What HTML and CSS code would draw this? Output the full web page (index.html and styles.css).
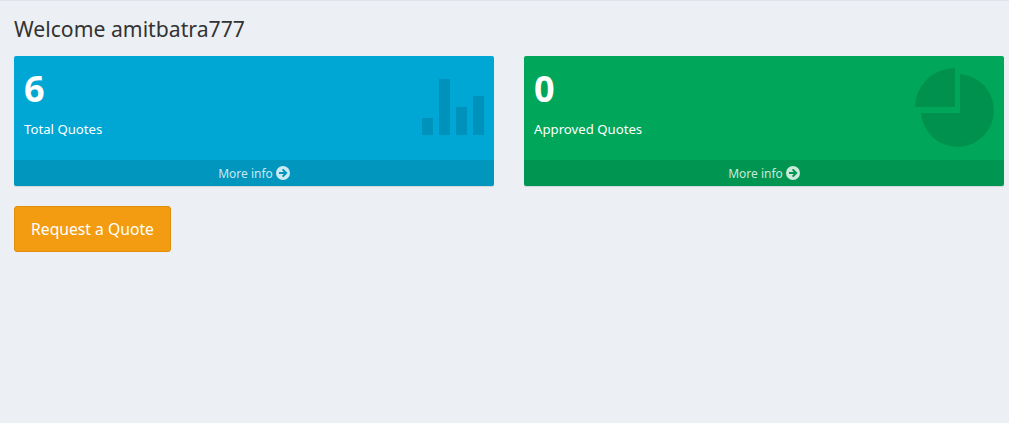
FILE: index.html
```html
<!DOCTYPE html>
<html lang="en">
<head>
<meta charset="utf-8">
<title>Dashboard</title>
<link rel="stylesheet" href="styles.css">
</head>
<body>
<main class="page">
  <h1 class="welcome">Welcome amitbatra777</h1>
  <section class="boxes">
    <article class="box box-blue">
      <div class="box-inner">
        <h3 class="box-num">6</h3>
        <p class="box-label">Total Quotes</p>
      </div>
      <svg class="box-icon icon-bars" viewBox="0 0 62 56" width="62" height="56" aria-hidden="true">
        <rect x="0" y="39" width="11" height="17"/>
        <rect x="17" y="0" width="11" height="56"/>
        <rect x="34" y="28" width="11" height="28"/>
        <rect x="51" y="17" width="11" height="39"/>
      </svg>
      <a class="box-footer" href="#">More info
        <svg class="arrow" viewBox="0 0 14 14" width="14" height="14" aria-hidden="true"><circle cx="7" cy="7" r="7" fill="currentColor"/><path class="arrow-mark" d="M3 7h7M6.6 3.4 10.2 7l-3.6 3.6"/></svg>
      </a>
    </article>
    <article class="box box-green">
      <div class="box-inner">
        <h3 class="box-num">0</h3>
        <p class="box-label">Approved Quotes</p>
      </div>
      <svg class="box-icon icon-pie" viewBox="0 0 80 80" width="80" height="80" aria-hidden="true">
        <path d="M40 0V39H0A40 39 0 0 1 40 0Z"/>
        <path d="M45 6A36.5 36.5 0 1 1 6 45H45Z"/>
      </svg>
      <a class="box-footer" href="#">More info
        <svg class="arrow" viewBox="0 0 14 14" width="14" height="14" aria-hidden="true"><circle cx="7" cy="7" r="7" fill="currentColor"/><path class="arrow-mark" d="M3 7h7M6.6 3.4 10.2 7l-3.6 3.6"/></svg>
      </a>
    </article>
  </section>
  <button class="quote-btn" type="button">Request a Quote</button>
</main>
</body>
</html>
```
FILE: styles.css
```css
* { box-sizing: border-box; }
html, body { height: 100%; }
body {
  margin: 0;
  background: #ecf0f5;
  border-top: 1px solid #dfe4ea;
  font-family: "Noto Sans", "Liberation Sans", sans-serif;
  color: #333;
  overflow: hidden;
}
.page { padding: 14px 5px 0 14px; }
.welcome {
  margin: 0;
  font-size: 21.2px;
  font-weight: 400;
  line-height: 27px;
  height: 41px;
  color: #333;
}
.boxes {
  display: grid;
  grid-template-columns: 480px 480px;
  column-gap: 30px;
}
.box {
  position: relative;
  height: 130px;
  border-radius: 2px;
  color: #fff;
  display: flex;
  flex-direction: column;
  justify-content: space-between;
  box-shadow: 0 1px 1px rgba(0,0,0,.1);
}
.box-blue { background: #00a7d4; }
.box-green { background: #00a65a; }
.box-inner { padding: 9px 10px 0; }
.box-num {
  margin: 0 0 8px;
  font-size: 36px;
  font-weight: 700;
  line-height: 47px;
}
.box-label {
  margin: 0;
  font-size: 13.2px;
  line-height: 18px;
  height: 18px;
}
.box-icon { position: absolute; fill: rgba(0,0,0,.12); }
.icon-bars { top: 23px; right: 10px; }
.icon-pie { top: 12px; right: 9px; }
.box-footer {
  display: flex;
  align-items: center;
  justify-content: center;
  gap: 3px;
  height: 26px;
  background: rgba(0,0,0,.1);
  color: rgba(255,255,255,.8);
  font-size: 12px;
  text-decoration: none;
  border-radius: 0 0 2px 2px;
}
.arrow-mark { fill: none; stroke: #0096bf; stroke-width: 2; }
.box-green .arrow-mark { stroke: #009551; }
.quote-btn {
  display: block;
  margin-top: 20px;
  width: 157px;
  height: 46px;
  padding: 0;
  background: #f39c12;
  border: 1px solid #e08e0b;
  border-radius: 3px;
  color: #fff;
  font-family: inherit;
  font-size: 15.7px;
}
```
